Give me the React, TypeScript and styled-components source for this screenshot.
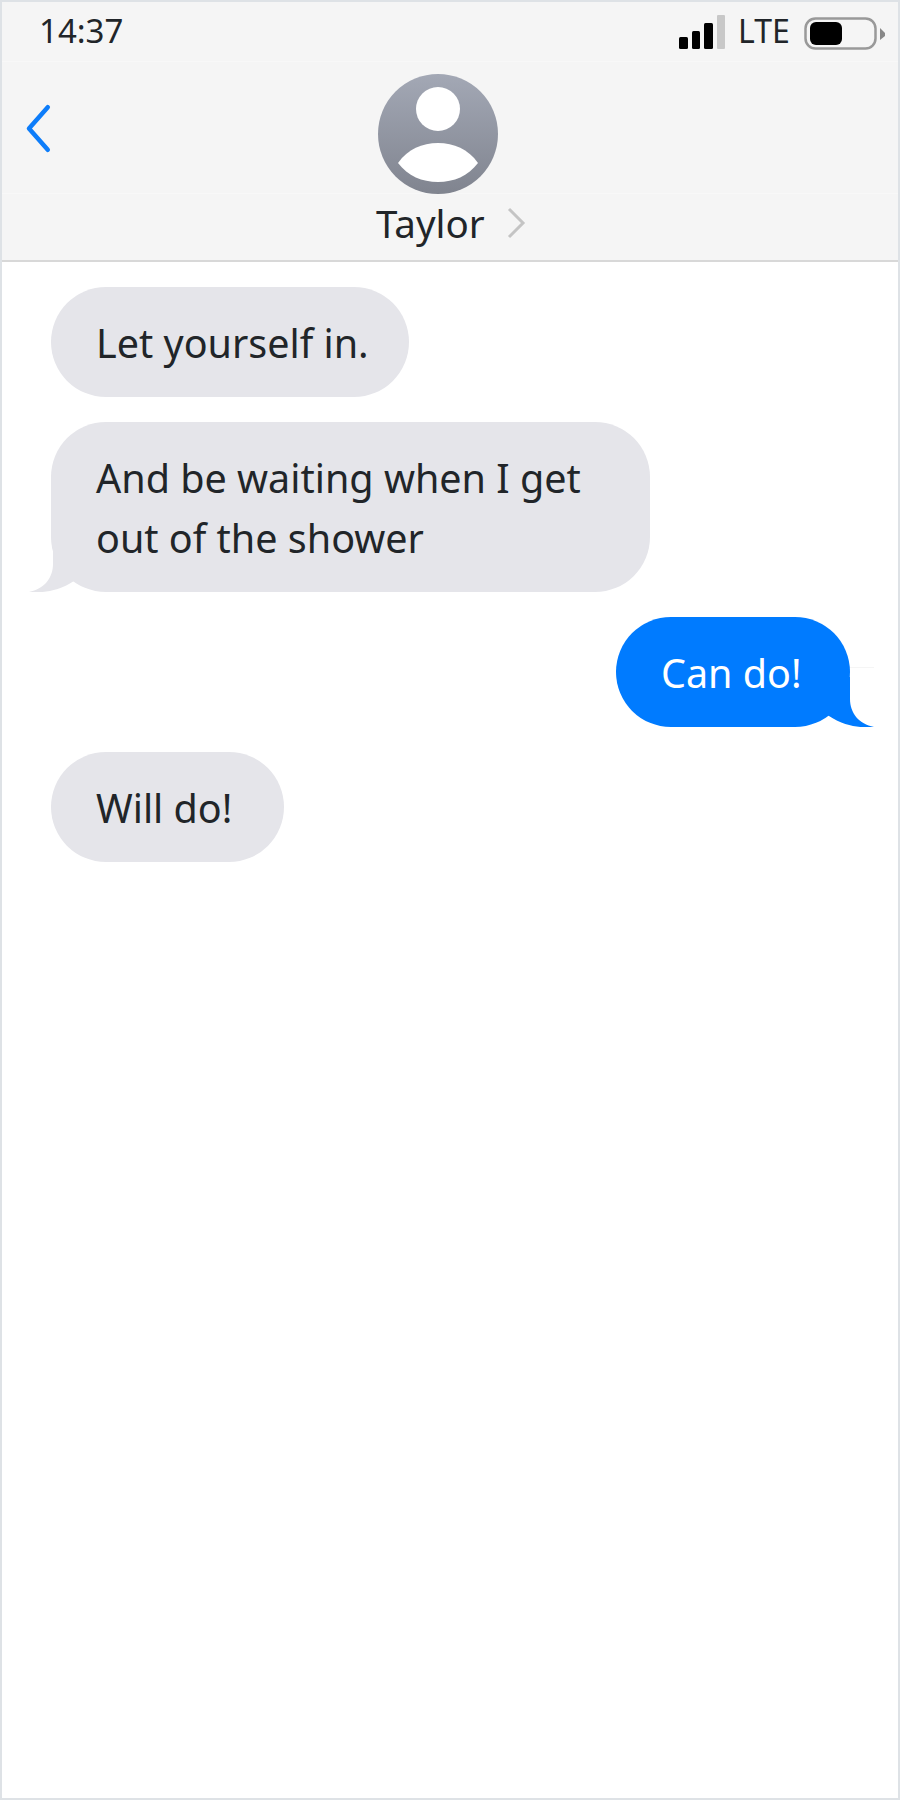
import React from "react";
import styled, { createGlobalStyle } from "styled-components";

const Global = createGlobalStyle`
  html, body { margin: 0; padding: 0; background: #fff; }
  * { box-sizing: border-box; }
`;

const Phone = styled.div`
  width: 900px;
  height: 1800px;
  border: 2px solid #dee2e6;
  background: #fff;
  font-family: "Noto Sans", "Open Sans", sans-serif;
  color: #212529;
  overflow: hidden;
`;

const Header = styled.header`
  background: #f5f5f5;
  border-bottom: 2px solid #d8d8d8;
  height: 260px;
`;

const StatusBar = styled.div`
  height: 60px;
  border-bottom: 1px solid #f8f8f8;
  display: flex;
  align-items: flex-start;
  padding: 0 10px 0 37px;
`;

const Clock = styled.span`
  font-size: 33px;
  line-height: 58px;
`;

const StatusRight = styled.div`
  margin-left: auto;
  display: flex;
  align-items: flex-start;
`;

const SignalIcon = styled.svg`
  margin-top: 11px;
  flex: none;
`;

const BatteryIcon = styled.svg`
  margin-top: 14px;
  flex: none;
`;

const Lte = styled.span`
  font-size: 32px;
  line-height: 58px;
  width: 50px;
  margin: 0 16px 0 12px;
`;

const AvatarRow = styled.div`
  height: 132px;
  display: flex;
  align-items: center;
  position: relative;
  border-bottom: 1px solid #f8f8f8;
`;

const BackIcon = styled.svg`
  margin-left: 22px;
  flex: none;
`;

const AvatarSlot = styled.div`
  position: absolute;
  left: 376px;
  top: 12px;
  line-height: 0;
`;

const NameRow = styled.div`
  height: 66px;
  display: flex;
  align-items: flex-start;
  padding-left: 374px;
`;

const Name = styled.span`
  font-size: 38.5px;
  line-height: 58px;
`;

const NameChevron = styled.svg`
  margin: 13px 0 0 21px;
  flex: none;
`;

const Thread = styled.main`
  display: flex;
  flex-direction: column;
  gap: 25px;
  padding: 25px 0 0;
`;

const Bubble = styled.div<{ $me?: boolean; $w: number }>`
  position: relative;
  font-size: 39.5px;
  line-height: 60px;
  padding: 26px 0 24px 45px;
  border-radius: 55px;
  width: ${(p) => p.$w}px;
  background: ${(p) => (p.$me ? "#007bff" : "#e5e5ea")};
  color: ${(p) => (p.$me ? "#fff" : "#212529")};
  align-self: ${(p) => (p.$me ? "flex-end" : "flex-start")};
  margin: ${(p) => (p.$me ? "0 48px 0 0" : "0 0 0 49px")};
`;

const Tail = styled.svg<{ $me?: boolean }>`
  position: absolute;
  bottom: 0;
  ${(p) => (p.$me ? "right: -24px;" : "left: -22px; transform: scaleX(-1);")}
`;

const RuleStub = styled.span`
  position: absolute;
  right: -24px;
  top: 50px;
  width: 24px;
  height: 1px;
  background: #f5f5f5;
`;

function TailShape({ me }: { me?: boolean }) {
  return (
    <Tail $me={me} width="48" height="50" viewBox="0 0 48 50">
      <path
        fill={me ? "#007bff" : "#e5e5ea"}
        d="M0 0H24V22C24 36 33 47 48 50C36 51 20 50 3 39L0 37Z"
      />
    </Tail>
  );
}

export default function App() {
  return (
    <Phone>
      <Global />
      <Header>
        <StatusBar>
          <Clock>14:37</Clock>
          <StatusRight>
            <SignalIcon width="47" height="36" viewBox="0 0 47 36">
              <rect x="0" y="24" width="9" height="12" rx="1.5" fill="#000" />
              <rect x="13" y="18" width="8" height="18" rx="1.5" fill="#000" />
              <rect x="25" y="10" width="9" height="26" rx="1.5" fill="#000" />
              <rect x="38" y="2" width="8" height="34" rx="1" fill="#c8c8c8" />
            </SignalIcon>
            <Lte>LTE</Lte>
            <BatteryIcon width="84" height="36" viewBox="0 0 84 36">
              <rect x="1.500" y="2.500" width="70" height="30" rx="10" fill="none" stroke="#999" strokeWidth="2.5" />
              <rect x="6" y="6" width="32" height="23" rx="6" fill="#000" />
              <path d="M76 12L81 17V20L76 24Z" fill="#888" />
            </BatteryIcon>
          </StatusRight>
        </StatusBar>
        <AvatarRow>
          <BackIcon width="30" height="52" viewBox="0 0 30 52">
            <path d="M23.750 5.250L5 26.500L23.750 47.750" fill="none" stroke="#0d7dfa" strokeWidth="4.5" strokeLinecap="round" strokeLinejoin="round" />
          </BackIcon>
          <AvatarSlot>
            <svg width="120" height="120" viewBox="0 0 120 120">
              <defs>
                <linearGradient id="av" x1="0" y1="0" x2="0" y2="1">
                  <stop offset="0" stopColor="#a3a8b5" />
                  <stop offset="1" stopColor="#80848f" />
                </linearGradient>
              </defs>
              <circle cx="60" cy="60" r="60" fill="url(#av)" />
              <circle cx="60" cy="35" r="22" fill="#fff" />
              <path d="M20 89C30 75 44 69 60 69S90 75 100 89C90 102 76 108 60 108S30 102 20 89Z" fill="#fff" />
            </svg>
          </AvatarSlot>
        </AvatarRow>
        <NameRow>
          <Name>Taylor</Name>
          <NameChevron width="20" height="32" viewBox="0 0 20 32">
            <path d="M3 2L17 16L3 30" fill="none" stroke="#c4c4c4" strokeWidth="3" />
          </NameChevron>
        </NameRow>
      </Header>
      <Thread>
        <Bubble $w={358}>Let yourself in.</Bubble>
        <Bubble $w={599}>
          And be waiting when I get
          <br />
          out of the shower
          <TailShape />
        </Bubble>
        <Bubble $me $w={234}>
          Can do!
          <RuleStub />
          <TailShape me />
        </Bubble>
        <Bubble $w={233}>Will do!</Bubble>
      </Thread>
    </Phone>
  );
}
